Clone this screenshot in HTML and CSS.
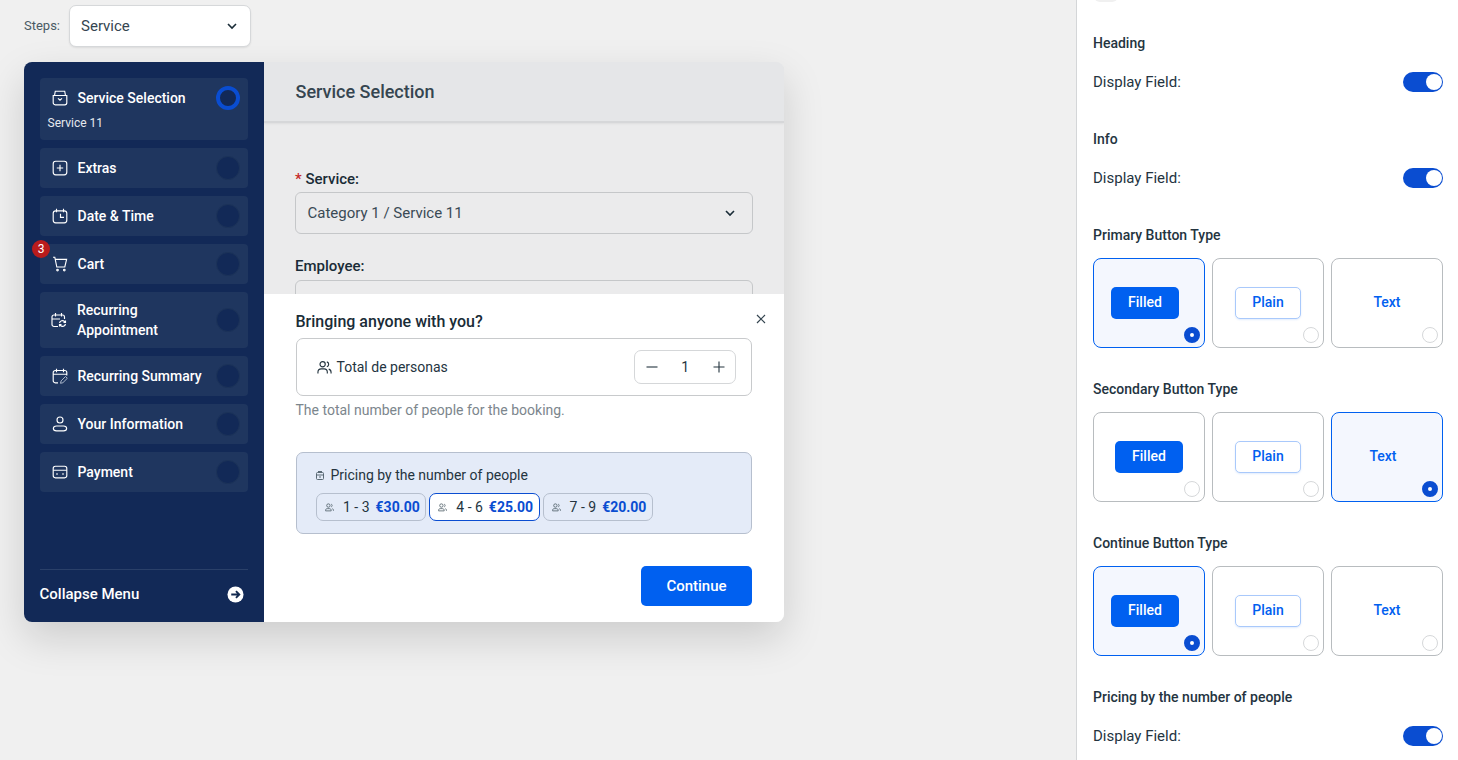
FILE: index.html
```html
<!DOCTYPE html>
<html lang="en">
<head>
<meta charset="utf-8">
<title>Service step</title>
<link rel="stylesheet" href="styles.css">
</head>
<body>
<div class="page">
  <main class="canvas">
    <div class="steps">
      <span class="steps-label">Steps:</span>
      <div class="steps-select"><span>Service</span>
        <svg class="chev" viewBox="0 0 12 12"><path d="M2 4l4 4 4-4"/></svg>
      </div>
    </div>
    <section class="card">
      <aside class="side">
        <nav class="nav">
          <div class="nav-item tall">
            <div class="nav-row">
              <svg class="ico" viewBox="0 0 16 16"><path d="M1.200 5.500h13.600v7.300a2 2 0 0 1-2 2H3.200a2 2 0 0 1-2-2zM2.500 5.500l.8-4.300h9.400l.8 4.300M6 8.300l2 1.900 2-1.900"/></svg>
              <span class="nav-text">Service Selection</span>
              <span class="dot active"></span>
            </div>
            <div class="nav-sub">Service 11</div>
          </div>
          <div class="nav-item">
            <svg class="ico" viewBox="0 0 16 16"><rect x="1.200" y="1.200" width="13.600" height="13.600" rx="2.500"/><path d="M8 4.800v6.400M4.800 8h6.400"/></svg>
            <span class="nav-text">Extras</span><span class="dot"></span>
          </div>
          <div class="nav-item">
            <svg class="ico" viewBox="0 0 16 16"><rect x="1.200" y="2.800" width="13.600" height="12" rx="2.500"/><path d="M4.500 .8v3.400M11.500 .8v3.400M8.500 5.800V9.300h3.500"/></svg>
            <span class="nav-text">Date &amp; Time</span><span class="dot"></span>
          </div>
          <div class="nav-item has-badge">
            <span class="badge">3</span>
            <svg class="ico" viewBox="0 0 16 16"><path d="M1 1.200h1.800L4.800 11h8l1.800-7.600H3.300"/><circle cx="5.500" cy="14" r=".8"/><circle cx="12.300" cy="14" r=".8"/></svg>
            <span class="nav-text">Cart</span><span class="dot"></span>
          </div>
          <div class="nav-item two">
            <svg class="ico wide" viewBox="0 0 16 16"><path d="M7 14.500H3A2 2 0 0 1 1 12.500V5A2 2 0 0 1 3 3h8.500A2 2 0 0 1 13.500 5v2M4.500 1v3.500M10.500 1v3.500M1 7h8M8.500 11a3 3 0 0 1 5-1.500l1 1M14.500 12a3 3 0 0 1-5 1.500l-1-1M14.500 8.500v2h-2M8.500 14.500v-2h2"/></svg>
            <span class="nav-text">Recurring<br>Appointment</span><span class="dot"></span>
          </div>
          <div class="nav-item">
            <svg class="ico" viewBox="0 0 16 16"><path d="M6 14.800H3.200a2 2 0 0 1-2-2V4.500a2 2 0 0 1 2-2h9.600a2 2 0 0 1 2 2v3M4.500 .8v3.400M11.500 .8v3.400M1.200 6.200h13.600"/><path class="thin" d="M8.500 15.300l.6-2.400 4.400-4.400 1.800 1.800-4.400 4.400z"/></svg>
            <span class="nav-text">Recurring Summary</span><span class="dot"></span>
          </div>
          <div class="nav-item">
            <svg class="ico" viewBox="0 0 16 16"><circle cx="8" cy="4" r="3"/><path d="M4.500 10h7c4.200 0 4.200 4.800 0 4.800h-7c-4.200 0-4.200-4.800 0-4.800z"/></svg>
            <span class="nav-text">Your Information</span><span class="dot"></span>
          </div>
          <div class="nav-item">
            <svg class="ico" viewBox="0 0 16 16"><rect x="1.200" y="2.200" width="13.600" height="11.600" rx="2.200"/><path d="M1.200 6.200h13.600M4 10h2M10 10h2"/></svg>
            <span class="nav-text">Payment</span><span class="dot"></span>
          </div>
        </nav>
        <div class="collapse">
          <span>Collapse Menu</span>
          <svg class="arrow" viewBox="0 0 18 18"><circle cx="9" cy="9" r="8.500" fill="#fff"/><path d="M4.500 9h8.500M9.500 5.500L13 9l-3.500 3.500" fill="none" stroke="#12294f" stroke-width="2"/></svg>
        </div>
      </aside>
      <div class="content">
        <header class="content-head">Service Selection</header>
        <div class="form">
          <label class="label"><span class="req">*</span> Service:</label>
          <div class="select">Category 1 / Service 11
            <svg class="chev" viewBox="0 0 12 12"><path d="M2 4l4 4 4-4"/></svg>
          </div>
          <label class="label second">Employee:</label>
          <div class="select"></div>
        </div>
        <div class="sheet">
          <button class="close" aria-label="Close"><svg viewBox="0 0 10 10"><path d="M1 1l8 8M9 1l-8 8"/></svg></button>
          <h2 class="sheet-title">Bringing anyone with you?</h2>
          <div class="people">
            <div class="people-label">
              <svg class="people-ico" viewBox="0 0 16 16"><circle cx="6" cy="4.500" r="2.800"/><path d="M1 14.500v-1.500c0-2 1.500-3.500 3.500-3.500h3c2 0 3.500 1.500 3.500 3.500v1.500M10.500 2a2.700 2.700 0 0 1 0 5.200M12.500 9.700c1.500.4 2.500 1.700 2.500 3.300v1.500"/></svg>
              <span>Total de personas</span>
            </div>
            <div class="stepper">
              <svg viewBox="0 0 12 12"><path d="M0.500 6h11"/></svg>
              <span>1</span>
              <svg viewBox="0 0 12 12"><path d="M0.500 6h11M6 .5v11"/></svg>
            </div>
          </div>
          <p class="hint">The total number of people for the booking.</p>
          <div class="pricing">
            <div class="pricing-head">
              <svg class="tiny" viewBox="0 0 8 9"><rect x=".5" y="1.500" width="7" height="7" rx="1"/><path d="M.5 4h7M3 6h2M2 .5h4"/></svg>
              <span>Pricing by the number of people</span>
            </div>
            <div class="chips">
              <div class="chip"><svg class="tiny-p" viewBox="0 0 16 16"><circle cx="6" cy="4.500" r="3"/><path d="M1 14v-1c0-2 1.500-3 3-3h4c1.500 0 3 1 3 3v1zM11 2a2.700 2.700 0 0 1 0 5M13 10c1.500.5 2 1.500 2 3v1"/></svg><span class="range">1 - 3</span><b>€30.00</b></div>
              <div class="chip on"><svg class="tiny-p" viewBox="0 0 16 16"><circle cx="6" cy="4.500" r="3"/><path d="M1 14v-1c0-2 1.500-3 3-3h4c1.500 0 3 1 3 3v1zM11 2a2.700 2.700 0 0 1 0 5M13 10c1.500.5 2 1.500 2 3v1"/></svg><span class="range">4 - 6</span><b>€25.00</b></div>
              <div class="chip"><svg class="tiny-p" viewBox="0 0 16 16"><circle cx="6" cy="4.500" r="3"/><path d="M1 14v-1c0-2 1.500-3 3-3h4c1.500 0 3 1 3 3v1zM11 2a2.700 2.700 0 0 1 0 5M13 10c1.500.5 2 1.500 2 3v1"/></svg><span class="range">7 - 9</span><b>€20.00</b></div>
            </div>
          </div>
          <div class="sheet-foot"><button class="continue">Continue</button></div>
        </div>
      </div>
    </section>
  </main>
  <aside class="panel">
    <div class="stub"></div>
    <h3 class="ptitle first">Heading</h3>
    <div class="toggle-row"><span>Display Field:</span><span class="toggle"></span></div>
    <h3 class="ptitle">Info</h3>
    <div class="toggle-row"><span>Display Field:</span><span class="toggle"></span></div>
    <h3 class="ptitle">Primary Button Type</h3>
    <div class="types">
      <div class="type sel"><span class="btn filled nudge">Filled</span><span class="radio on"></span></div>
      <div class="type"><span class="btn plain">Plain</span><span class="radio"></span></div>
      <div class="type"><span class="btn text">Text</span><span class="radio"></span></div>
    </div>
    <h3 class="ptitle tight">Secondary Button Type</h3>
    <div class="types">
      <div class="type"><span class="btn filled">Filled</span><span class="radio"></span></div>
      <div class="type"><span class="btn plain">Plain</span><span class="radio"></span></div>
      <div class="type sel"><span class="btn text shift">Text</span><span class="radio on"></span></div>
    </div>
    <h3 class="ptitle tight">Continue Button Type</h3>
    <div class="types">
      <div class="type sel"><span class="btn filled nudge">Filled</span><span class="radio on"></span></div>
      <div class="type"><span class="btn plain">Plain</span><span class="radio"></span></div>
      <div class="type"><span class="btn text">Text</span><span class="radio"></span></div>
    </div>
    <h3 class="ptitle tight">Pricing by the number of people</h3>
    <div class="toggle-row"><span>Display Field:</span><span class="toggle"></span></div>
  </aside>
</div>
</body>
</html>
```
FILE: styles.css
```css
* { box-sizing: border-box; }
html, body { margin: 0; height: 100%; overflow: hidden; }
body { font-family: Roboto, "Liberation Sans", sans-serif; color: #1a2c37; background: #f0f0f0; }
.page { display: flex; height: 760px; width: 1458px; overflow: hidden; }
.canvas { flex: 1; padding: 5px 0 0 24px; min-width: 0; }

.steps { display: flex; align-items: center; gap: 9px; height: 41px; margin-bottom: 16px; }
.steps-label { font-size: 13px; color: #4a5a64; }
.steps-select { width: 182px; height: 42px; background: #fff; border: 1px solid #d6d8da; border-radius: 7px; display: flex; align-items: center; justify-content: space-between; padding: 0 12px 0 11px; font-size: 15px; color: #354550; box-shadow: 0 1px 2px rgba(0,0,0,.08); }
.chev { width: 12px; height: 12px; fill: none; stroke: #1a2c37; stroke-width: 1.600; }

.card { display: flex; width: 760px; height: 560px; border-radius: 8px; overflow: hidden; box-shadow: 0 16px 40px rgba(0,0,0,.15); }
.side { width: 240px; flex: none; background: #122957; padding: 16px 16px 0; display: flex; flex-direction: column; }
.nav { display: flex; flex-direction: column; gap: 8px; flex: 1; }
.nav-item { position: relative; display: flex; align-items: center; height: 40px; padding: 0 8px 0 12px; background: #1f365f; border-radius: 4px; color: #fff; font-size: 14px; font-weight: 500; }
.nav-item.tall { display: block; height: 62px; }
.nav-row { display: flex; align-items: center; height: 40px; }
.nav-sub { font-size: 12px; font-weight: 400; color: #e6e9ef; margin: -2px 0 0 -4.500px; line-height: 14px; }
.nav-item.two { height: 56px; }
.nav-text { flex: 1; line-height: 20px; white-space: nowrap; }
.ico { width: 16px; height: 16px; margin-right: 9.500px; flex: none; fill: none; stroke: #fff; stroke-width: 1.150; }
.ico.wide { margin-left: -1px; margin-right: 10px; }
.thin { stroke: #cdd5e3; stroke-width: .8; }
.dot { width: 24px; height: 24px; border-radius: 50%; background: #122957; border: 1px solid #1c3359; flex: none; }
.dot.active { border: 4px solid #0a4dd1; }
.badge { position: absolute; left: -8px; top: -4px; width: 18px; height: 18px; border-radius: 50%; background: #b91c1c; color: #fff; font-size: 12px; font-weight: 400; text-align: center; line-height: 18px; }

.collapse { height: 53px; border-top: 1px solid #2a4069; display: flex; align-items: center; justify-content: space-between; color: #fff; font-size: 15px; font-weight: 500; padding: 0 4px 4px 0; }
.collapse span { margin-left: -.5px; }
.arrow { width: 17px; height: 17px; }

.content { position: relative; flex: 1; background: #ebebec; min-width: 0; }
.content-head { height: 61px; padding: 0 31px 0 31.500px; line-height: 60px; font-size: 18px; font-weight: 500; color: #354550; background: #e5e6e8; border-bottom: 2px solid #d6d7d9; box-shadow: 0 1px 2px rgba(0,0,0,.06); }
.form { padding: 46px 31px 0; }
.label { display: block; font-size: 15px; font-weight: 500; color: #1a2c37; line-height: 20px; margin-bottom: 3px; }
.label.second { margin-top: 22px; margin-bottom: 4px; }
.req { color: #c62828; }
.select { height: 42px; border: 1px solid #c5c7c9; border-radius: 6px; display: flex; align-items: center; justify-content: space-between; padding: 0 16px 0 11.500px; font-size: 15px; color: #3a4a55; }

.sheet { position: absolute; left: 0; right: 0; bottom: 0; height: 328px; background: #fff; padding: 18px 32px 16px; }
.close { position: absolute; right: 18px; top: 20px; width: 10px; height: 10px; padding: 0; border: 0; background: none; }
.close svg { display: block; width: 10px; height: 10px; fill: none; stroke: #354550; stroke-width: 1.200; }
.sheet-title { margin: 0 0 6px -.5px; font-size: 16px; font-weight: 500; line-height: 20px; color: #1a2c37; }
.people { height: 58px; border: 1px solid #c8cacc; border-radius: 7px; display: flex; align-items: center; justify-content: space-between; padding: 0 15px 0 19.500px; }
.people-label { display: flex; align-items: center; gap: 5px; font-size: 14px; color: #24343f; }
.people-ico { width: 15px; height: 15px; fill: none; stroke: #24343f; stroke-width: 1.200; }
.stepper { width: 102px; height: 34px; border: 1px solid #d5d7d9; border-radius: 7px; display: flex; align-items: center; justify-content: space-between; padding: 0 10.500px 0 11px; font-size: 14px; color: #24343f; }
.stepper svg { width: 12px; height: 12px; fill: none; stroke: #24343f; stroke-width: 1.100; }
.hint { margin: 5px 0 0 -.5px; font-size: 14px; line-height: 18px; color: #7c868d; }
.pricing { margin-top: 33px; height: 82px; background: #e4ebf8; border: 1px solid #b6bfce; border-radius: 7px; padding: 13px 19px 0; }
.pricing-head { display: flex; align-items: center; gap: 6.500px; font-size: 14px; line-height: 18px; color: #24343f; margin-bottom: 9px; }
.tiny { width: 8px; height: 9px; fill: none; stroke: #5a6a75; stroke-width: 1; }
.chips { display: flex; gap: 3px; }
.chip { height: 28px; border: 1px solid #b6bfce; border-radius: 7px; display: flex; align-items: center; padding: 0 5.500px 0 8px; font-size: 14px; color: #24343f; white-space: nowrap; }
.chip.on { background: #fff; border-color: #0a4dd1; }
.tiny-p { width: 9px; height: 9px; flex: none; margin-right: 9px; fill: none; stroke: #4a5a64; stroke-width: 1.400; }
.range { margin-right: 6px; }
.chip b { color: #0a4dd1; font-weight: 700; }
.sheet-foot { display: flex; justify-content: flex-end; margin-top: 32px; }
.continue { width: 111px; height: 40px; border: 0; border-radius: 5px; background: #0060f0; color: #fff; font: 500 15px Roboto, sans-serif; }

.panel { position: relative; width: 382px; flex: none; background: #fff; border-left: 1px solid #d4d6d8; padding: 0 15px 0 16px; }
.stub { position: absolute; left: 17px; top: -12px; width: 24px; height: 14px; border-radius: 6px; background: #f0f0f0; }
.ptitle { margin: 0; font-size: 14px; line-height: 20px; font-weight: 500; color: #24343f; padding-top: 37px; }
.ptitle.first { padding-top: 33px; }
.ptitle.tight { padding-top: 31px; }
.toggle-row { display: flex; align-items: center; justify-content: space-between; height: 20px; margin-top: 19px; font-size: 15px; color: #24343f; }
.toggle { position: relative; display: block; width: 40px; height: 20px; border-radius: 10px; background: #0a4dd1; }
.toggle::after { content: ""; position: absolute; right: 1px; top: 2px; width: 16px; height: 16px; border-radius: 50%; background: #fff; }
.types { display: grid; grid-template-columns: repeat(3, 112px); gap: 7px; margin-top: 13px; }
.type { position: relative; height: 90px; border: 1px solid #b8bcbf; border-radius: 8px; display: flex; align-items: center; justify-content: center; }
.type.sel { background: #f4f7fe; border-color: #0060f0; }
.btn { display: block; font-size: 14px; font-weight: 500; border-radius: 4px; text-align: center; }
.btn.filled { width: 68px; height: 32px; line-height: 30px; background: #0060f0; color: #fff; border-radius: 5px; }
.btn.plain { width: 66px; height: 32px; line-height: 28px; border: 1px solid #a9c9fb; color: #0060f0; background: #fff; border-radius: 5px; box-shadow: 0 1px 2px rgba(0,96,240,.12); }
.btn.text { color: #0060f0; height: 32px; line-height: 30px; }
.btn.nudge { position: relative; left: -4px; }
.btn.shift { position: relative; left: -4px; }
.radio { position: absolute; right: 4px; bottom: 4px; width: 16px; height: 16px; border-radius: 50%; border: 1px solid #d6d8da; background: #fff; }
.radio.on { background: #fff; border: 6px solid #0a4dd1; }
```
